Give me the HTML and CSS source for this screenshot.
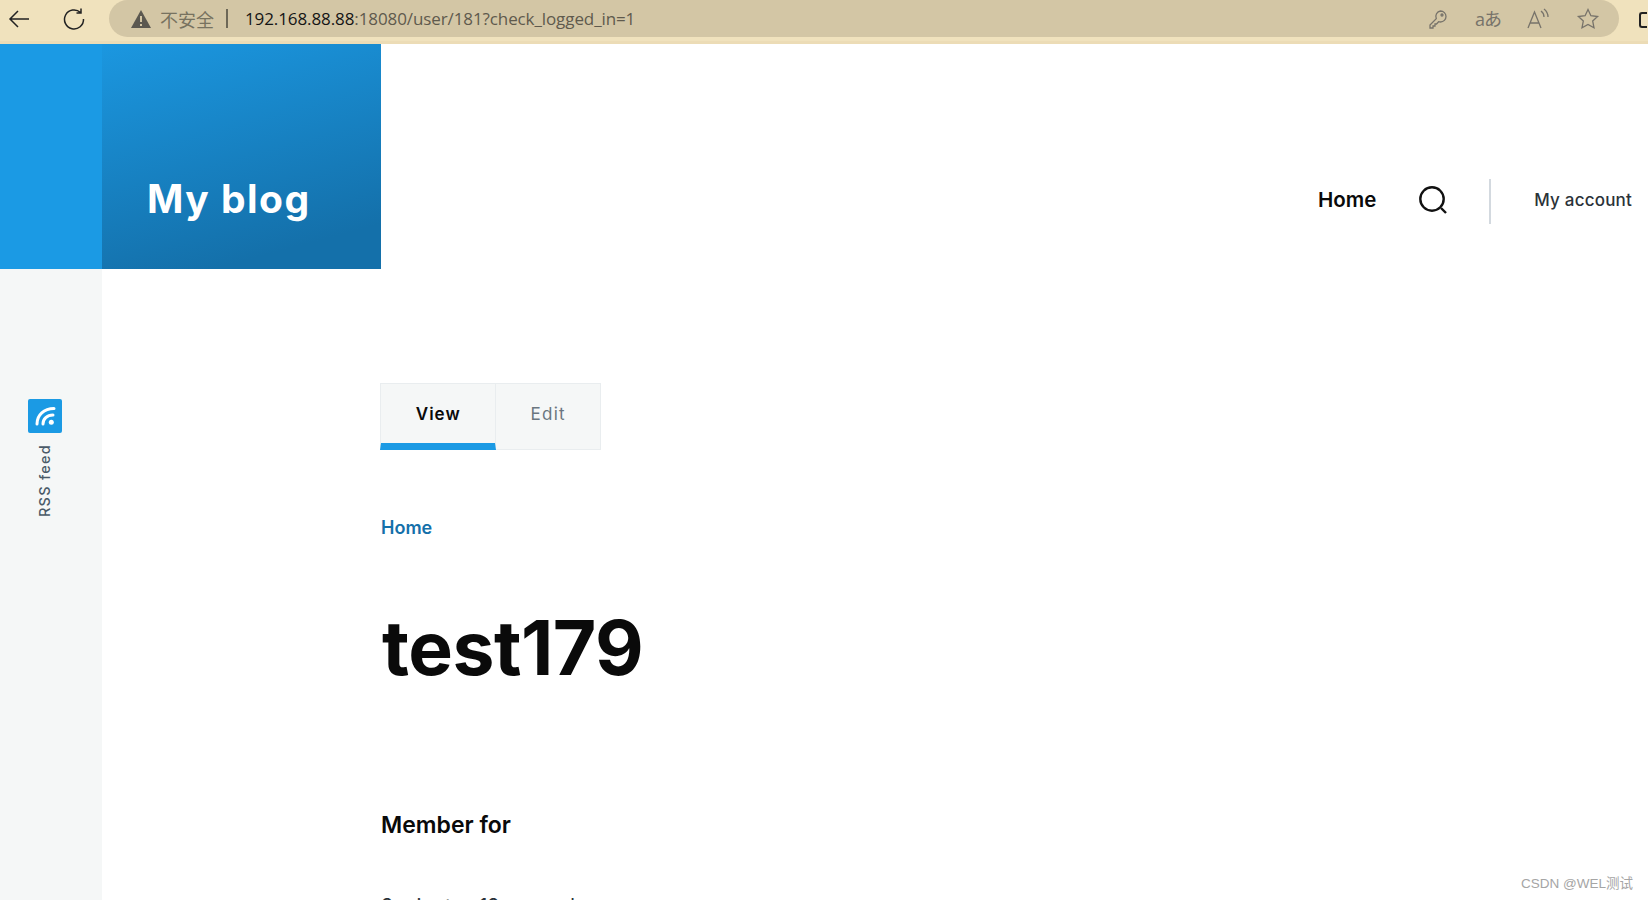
FILE: index.html
```html
<!DOCTYPE html>
<html lang="en">
<head>
<meta charset="utf-8">
<title>test179 | My blog</title>
<link rel="stylesheet" href="styles.css">
</head>
<body>
<div class="browser-bar">
  <svg class="nav-icon back" width="24" height="24" viewBox="0 0 24 24"><path d="M22 12H3M11 4l-8 8 8 8"/></svg>
  <svg class="nav-icon reload" width="24" height="24" viewBox="0 0 24 24"><path d="M18.500 5.500A9.500 9.500 0 1 0 21.500 12M19 1.500v4.500h-4.500"/></svg>
  <div class="address">
    <svg class="warn" width="22" height="20" viewBox="0 0 22 20"><path class="warn-fill" d="M11 1 21 19H1z"/><path class="warn-mark" d="M11 7v6M11 15v2"/></svg>
    <span class="insecure">不安全</span>
    <span class="sep"></span>
    <span class="url"><span class="host">192.168.88.88</span>:18080/user/181?check_logged_in=1</span>
    <span class="addr-tools">
      <svg class="tool" width="22" height="22" viewBox="0 0 22 22"><path d="M13.500 3a5.500 5.500 0 0 1 0 11c-.7 0-1.300-.1-1.900-.3L9.500 16H8v2H6v2H3v-3l6.300-6.300A5.500 5.500 0 0 1 13.500 3z"/><circle cx="15" cy="7" r="1"/></svg>
      <span class="tool-text">aあ</span>
      <svg class="tool" width="24" height="22" viewBox="0 0 24 22"><path d="M2 20 8.500 4 15 20M4.200 15h8.600M15 3c2 1.500 3 3.500 3 6M18 1c2.500 2 4 5 4 8"/></svg>
      <svg class="tool" width="24" height="24" viewBox="0 0 24 24"><path d="m12 2.500 2.900 6.200 6.700.8-4.900 4.600 1.300 6.700L12 17.500l-6 3.300 1.300-6.700-4.900-4.600 6.700-.8z"/></svg>
    </span>
  </div>
  <span class="edge-stub"></span>
</div>

<div class="page">
  <aside class="side">
    <div class="side-top"></div>
    <div class="social">
      <a class="rss-badge"><svg width="34" height="34" viewBox="0 0 34 34"><path d="M9 25C9 16 16 9.500 26 9.500M15 25c0-5 4-9 10-9"/><circle cx="23.300" cy="23.300" r="2.500"/></svg></a>
      <span class="rss-label">RSS feed</span>
    </div>
  </aside>

  <div class="body-col">
    <header class="head">
      <div class="brand"><a class="brand-name">My blog</a></div>
      <nav class="head-nav">
        <a class="nav-home">Home</a>
        <svg class="search" width="30" height="30" viewBox="0 0 30 30"><circle cx="14" cy="14" r="11.700"/><path d="m23 23 5 5"/></svg>
        <span class="nav-rule"></span>
        <a class="nav-account">My account</a>
      </nav>
    </header>

    <main class="content">
      <ul class="tabs">
        <li class="tab tab-active">View</li>
        <li class="tab">Edit</li>
      </ul>
      <a class="crumb">Home</a>
      <h1 class="title">test179</h1>
      <h4 class="label">Member for</h4>
      <p class="value">9 minutes 12 seconds</p>
    </main>
  </div>
</div>
<div class="watermark">CSDN @WEL测试</div>
</body>
</html>
```

FILE: styles.css
```css
* { box-sizing: border-box; }
html, body { margin: 0; height: 900px; overflow: hidden; background: #fff; }
body { font-family: Inter, "Noto Sans CJK SC", sans-serif; color: #0a0a0a; position: relative; }
a { display: block; }

.browser-bar {
  height: 44px;
  background: #f0e2bd;
  border-bottom: 3px solid #ecdcb6;
  display: flex;
  align-items: flex-start;
  font-family: "Open Sans", "Noto Sans CJK SC", sans-serif;
}
.nav-icon { fill: none; stroke: #222; stroke-width: 1.500; flex: none; margin-top: 7px; }
.back { margin-left: 7px; }
.reload { margin-left: 31px; }
.address {
  margin-left: 23px;
  width: 1510px;
  height: 37px;
  background: #d3c6a5;
  border-radius: 19px;
  display: flex;
  align-items: center;
  padding-left: 21px;
  font-size: 17px;
  color: #5f5a4d;
  flex: none;
}
.warn { flex: none; }
.warn-fill { fill: #5b5850; }
.warn-mark { stroke: #d3c6a5; stroke-width: 2; fill: none; }
.insecure { margin-left: 8px; font-size: 18px; color: #77725f; }
.sep { width: 2px; height: 19px; background: #6d6857; margin-left: 12px; }
.url { margin-left: 17px; letter-spacing: -0.100px; white-space: nowrap; }
.host { color: #151515; }
.addr-tools { margin-left: auto; display: flex; align-items: center; gap: 26px; padding-right: 19px; }
.tool { fill: none; stroke: #77736a; stroke-width: 1.300; flex: none; }
.tool-text { font-size: 18px; color: #77736a; line-height: 22px; width: 25px; white-space: nowrap; letter-spacing: -1px; }
.edge-stub { width: 8px; height: 16px; border: 2px solid #222; border-right: 0; border-radius: 3px 0 0 3px; margin: 12px 0 0 20px; flex: none; }

.page { display: grid; grid-template-columns: 102px 1fr; height: 856px; }
.side { background: #f5f7f7; display: flex; flex-direction: column; align-items: center; }
.side-top { height: 225px; width: 100%; background: #1b9ae4; flex: none; }
.social { margin-top: 130px; margin-left: -12px; display: flex; flex-direction: column; align-items: center; gap: 11px; }
.rss-badge { width: 34px; height: 34px; background: #1b9ae4; border-radius: 2px; }
.rss-badge svg { display: block; fill: #fff; }
.rss-badge path { fill: none; stroke: #fff; stroke-width: 3; stroke-linecap: round; }
.rss-label { writing-mode: vertical-rl; transform: rotate(180deg); font-size: 14.500px; font-weight: 500; letter-spacing: 1.250px; color: #4a5a68; line-height: 18px; }

.head { height: 225px; display: flex; align-items: stretch; justify-content: space-between; }
.brand {
  width: 279px;
  background: linear-gradient(165deg, #1b97e0 0%, #1470aa 85%);
  display: flex;
  align-items: flex-end;
  padding: 0 0 47px 45px;
}
.brand-name { color: #fff; font-size: 39px; font-weight: 700; line-height: 46px; letter-spacing: 1.500px; }
.head-nav { display: flex; align-items: center; padding-top: 86px; padding-right: 16px; }
.nav-home { font-size: 20.500px; font-weight: 600; }
.search { fill: none; stroke: #111; stroke-width: 2.400; margin-left: 42px; flex: none; }
.nav-rule { width: 2px; height: 45px; background: #d3d9df; margin: 4px 0 0 41px; }
.nav-account { font-size: 17px; font-weight: 500; color: #2b3238; margin-left: 43px; letter-spacing: 0.200px; }

.content { padding: 114px 0 0 278px; }
.tabs { list-style: none; margin: 0; padding: 0; display: flex; height: 67px; width: 221px; }
.tab {
  display: flex;
  align-items: center;
  justify-content: center;
  padding-bottom: 5px;
  flex: 105 0 0;
  background: #f5f7f7;
  border: 1px solid #e9edef;
  border-left: 0;
  font-size: 17px;
  letter-spacing: 1.300px;
  color: #6a7680;
}
.tab-active { flex: 116 0 0; letter-spacing: 1px; color: #0a0a0a; font-weight: 600; border-left: 1px solid #e9edef; border-bottom: 7px solid #1b9ae4; padding-bottom: 0; }
.crumb { margin: 67px 0 0 1px; font-size: 18px; font-weight: 600; line-height: 22px; color: #1470aa; }
.title { margin: 66px 0 0 2px; font-size: 75px; line-height: 86px; font-weight: 700; letter-spacing: -0.500px; }
.label { margin: 119px 0 0 1px; font-size: 23px; line-height: 30px; font-weight: 600; }
.value { margin: 53px 0 0 1px; font-size: 20px; line-height: 27px; color: #2b3238; }

.watermark { position: absolute; right: 15px; bottom: 7px; font-size: 13.500px; line-height: 18px; color: #a5a5a5; font-family: "Liberation Sans", "Noto Sans CJK SC", sans-serif; }
```
